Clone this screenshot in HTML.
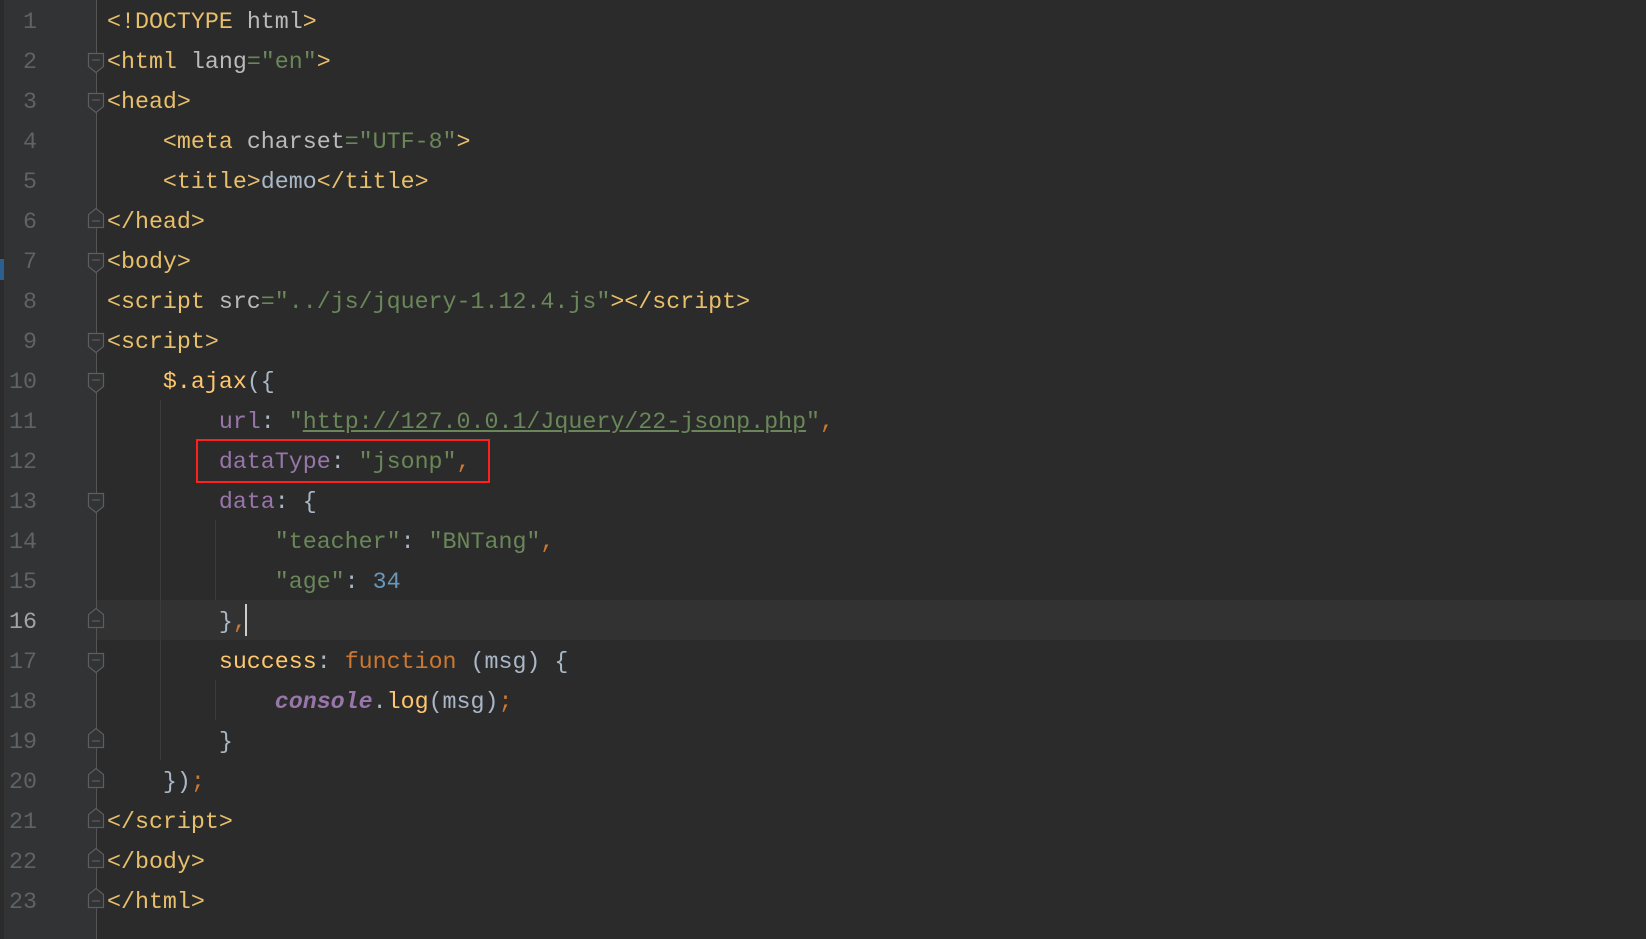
<!DOCTYPE html>
<html><head><meta charset="utf-8"><style>
html,body{margin:0;padding:0;background:#2b2b2b;width:1646px;height:939px;overflow:hidden}
#gut{position:absolute;left:0;top:0;width:96px;height:939px;background:#313335}
#strip{position:absolute;left:0;top:0;width:4px;height:939px;background:#2b2b2b}
#blue{position:absolute;left:0;top:259px;width:4px;height:21px;background:#2a5f8f}
#cur{position:absolute;left:96px;top:600px;width:1550px;height:40px;background:#323232}
#fl{position:absolute;left:96px;top:0;width:1px;height:939px;background:#555}
.ig{position:absolute;width:1px;background:#3b3b3b}
.num,.code{position:absolute;top:2px;margin:0;font-family:"Liberation Mono",monospace;font-size:23.3px;line-height:40px;white-space:pre}
.num{left:0;width:37px;text-align:right;color:#606366}
.code{left:107px;color:#a9b7c6}
.t{color:#e8bf6a}.a{color:#bababa}.s{color:#6a8759}.p{color:#9876aa}.k{color:#cc7832}.n{color:#6897bb}.f{color:#ffc66d}
.u{color:#6a8759;text-decoration:underline}
.it{color:#9876aa;font-style:italic;font-weight:bold}
#box{position:absolute;left:196px;top:439px;width:290px;height:40px;border:2px solid #ff2020}
#caret{position:absolute;left:245px;top:604px;width:2px;height:32px;background:#ccc}
</style></head><body>
<div id="gut"></div><div id="strip"></div><div id="blue"></div>
<div id="cur"></div><div id="fl"></div>
<div class="ig" style="left:160px;top:400px;height:360px"></div>
<div class="ig" style="left:215px;top:520px;height:80px"></div>
<div class="ig" style="left:215px;top:680px;height:40px"></div>
<svg style="position:absolute;left:0;top:0" width="120" height="939">
<g fill="#313335" stroke="#5d5d5d" stroke-width="1.2">
<g><path d="M88.5 53.5h15v13l-7.5 6l-7.5-6z"/><path d="M92 60h8"/></g>
<g transform="translate(0,40)"><path d="M88.5 53.5h15v13l-7.5 6l-7.5-6z"/><path d="M92 60h8"/></g>
<g transform="translate(0,200)"><path d="M88.5 53.5h15v13l-7.5 6l-7.5-6z"/><path d="M92 60h8"/></g>
<g transform="translate(0,280)"><path d="M88.5 53.5h15v13l-7.5 6l-7.5-6z"/><path d="M92 60h8"/></g>
<g transform="translate(0,320)"><path d="M88.5 53.5h15v13l-7.5 6l-7.5-6z"/><path d="M92 60h8"/></g>
<g transform="translate(0,440)"><path d="M88.5 53.5h15v13l-7.5 6l-7.5-6z"/><path d="M92 60h8"/></g>
<g transform="translate(0,600)"><path d="M88.5 53.5h15v13l-7.5 6l-7.5-6z"/><path d="M92 60h8"/></g>
<g transform="translate(0,160)"><path d="M88.5 67.5h15v-13l-7.5-6l-7.5 6z"/><path d="M92 61h8"/></g>
<g transform="translate(0,560)"><path d="M88.5 67.5h15v-13l-7.5-6l-7.5 6z"/><path d="M92 61h8"/></g>
<g transform="translate(0,680)"><path d="M88.5 67.5h15v-13l-7.5-6l-7.5 6z"/><path d="M92 61h8"/></g>
<g transform="translate(0,720)"><path d="M88.5 67.5h15v-13l-7.5-6l-7.5 6z"/><path d="M92 61h8"/></g>
<g transform="translate(0,760)"><path d="M88.5 67.5h15v-13l-7.5-6l-7.5 6z"/><path d="M92 61h8"/></g>
<g transform="translate(0,800)"><path d="M88.5 67.5h15v-13l-7.5-6l-7.5 6z"/><path d="M92 61h8"/></g>
<g transform="translate(0,840)"><path d="M88.5 67.5h15v-13l-7.5-6l-7.5 6z"/><path d="M92 61h8"/></g>
</g></svg>
<pre class="num">1
2
3
4
5
6
7
8
9
10
11
12
13
14
15
<span style="color:#a4a3a3">16</span>
17
18
19
20
21
22
23</pre>
<pre class="code"><span class="t">&lt;!DOCTYPE </span><span class="a">html</span><span class="t">&gt;</span>
<span class="t">&lt;html </span><span class="a">lang</span><span class="s">="en"</span><span class="t">&gt;</span>
<span class="t">&lt;head&gt;</span>
    <span class="t">&lt;meta </span><span class="a">charset</span><span class="s">="UTF-8"</span><span class="t">&gt;</span>
    <span class="t">&lt;title&gt;</span>demo<span class="t">&lt;/title&gt;</span>
<span class="t">&lt;/head&gt;</span>
<span class="t">&lt;body&gt;</span>
<span class="t">&lt;script </span><span class="a">src</span><span class="s">="../js/jquery-1.12.4.js"</span><span class="t">&gt;&lt;/script&gt;</span>
<span class="t">&lt;script&gt;</span>
    <span class="f">$.ajax</span>({
        <span class="p">url</span>: <span class="s">"</span><span class="u">http://127.0.0.1/Jquery/22-jsonp.php</span><span class="s">"</span><span class="k">,</span>
        <span class="p">dataType</span>: <span class="s">"jsonp"</span><span class="k">,</span>
        <span class="p">data</span>: {
            <span class="s">"teacher"</span>: <span class="s">"BNTang"</span><span class="k">,</span>
            <span class="s">"age"</span>: <span class="n">34</span>
        }<span class="k">,</span>
        <span class="f">success</span>: <span class="k">function</span> (msg) {
            <span class="it">console</span>.<span class="f">log</span>(msg)<span class="k">;</span>
        }
    })<span class="k">;</span>
<span class="t">&lt;/script&gt;</span>
<span class="t">&lt;/body&gt;</span>
<span class="t">&lt;/html&gt;</span></pre>
<div id="caret"></div>
<div id="box"></div>
</body></html>
